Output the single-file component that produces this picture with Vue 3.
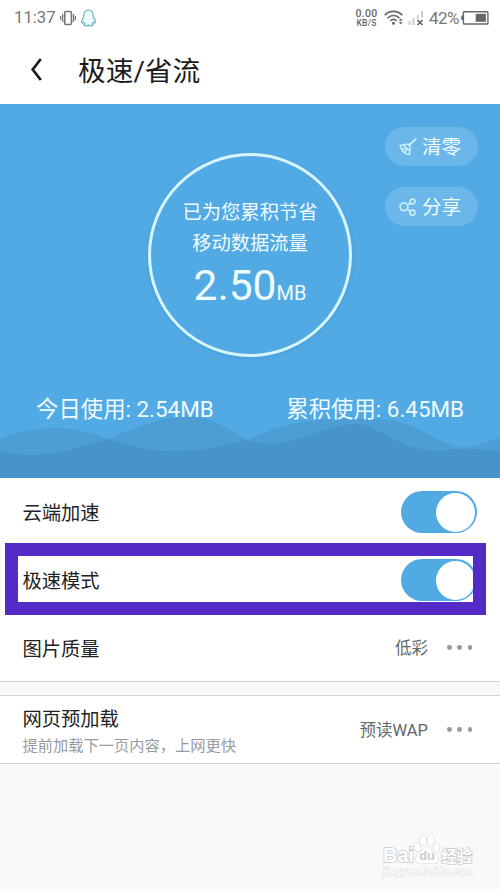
<script setup>
import { reactive } from 'vue'

const toggles = reactive([
  { label: '云端加速', on: true, marked: false },
  { label: '极速模式', on: true, marked: true },
])
</script>

<template>
  <div class="screen">
    <header class="status">
      <span class="time">11:37</span>
      <svg class="vibrate" width="16" height="16" viewBox="0 0 16 16" fill="none" stroke="#777">
        <rect x="4.8" y="1.5" width="6.6" height="13" rx="1" stroke-width="1.6" />
        <path d="M2.7 4v8M13.5 4v8M.7 6v4M15.4 6v4" stroke-width="1.3" />
      </svg>
      <svg class="penguin" width="15" height="18" viewBox="0 0 15 18" fill="#f2fcff" stroke="#59a9c4" stroke-width="1.1" stroke-linejoin="round">
        <path d="M7.5 1C4.700 1 3 3 3 5.800c0 1.600-.4 2.400-1.200 3.700C.8 11.200.6 13.500 1.200 14c.5.4 1.200-.4 1.600-1 .2.900.600 1.500 1.200 2-1 .5-1.400 1.500-.4 1.800 1.500.5 3-.1 3.900-.8.9.7 2.400 1.300 3.900.8 1-.3.6-1.300-.4-1.800.6-.5 1-1.100 1.200-2 .4.6 1.100 1.400 1.600 1 .6-.5.4-2.800-.6-4.500C12.400 8.200 12 7.400 12 5.800 12 3 10.300 1 7.500 1z" />
      </svg>
      <span class="spacer"></span>
      <span class="speed"><b>0.00</b><small>KB/S</small></span>
      <svg class="wifi" width="20" height="16" viewBox="0 0 20 16" fill="none" stroke="#666" stroke-width="1.7">
        <path d="M.8 5.200C5.500.2 13.500.2 18.200 5.200M3.500 8.200c3.300-3.600 8.700-3.600 12 0M6.300 11c1.900-1.900 4.500-1.900 6.400 0" />
        <circle cx="9.500" cy="13.200" r="1.500" fill="#666" stroke="none" />
        <path d="M14.900 10.700 16.700 8.300l1.800 2.400zM14.900 12l1.800 2.400 1.800-2.400z" fill="#666" stroke="none" />
      </svg>
      <svg class="signal" width="16" height="16" viewBox="0 0 16 16">
        <path d="M.5 11h2v4h-2zM4.500 8h2v7h-2zM8.800 5h2v4h-2zM13 1h2v6.500h-2z" fill="#ccc" />
        <path d="m9.500 10 5 5m0-5-5 5" stroke="#666" stroke-width="1.700" />
      </svg>
      <span class="percent">42%</span>
      <svg class="battery" width="28" height="16" viewBox="0 0 28 16">
        <path d="M.3 5.500h1.700v4.500H.3z" fill="#666" />
        <rect x="2.400" y="1.700" width="24.500" height="12.300" rx=".8" fill="none" stroke="#666" stroke-width="1.400" />
        <path d="M14.700 3.800h10.200v8H14.700z" fill="#666" />
      </svg>
    </header>

    <nav class="titlebar">
      <svg width="12" height="24" viewBox="0 0 12 24" fill="none" stroke="#1c1c1c" stroke-width="2.700">
        <path d="M10.800 1 2.700 11.500l8.100 10.500" />
      </svg>
      <h1>极速/省流</h1>
    </nav>

    <section class="hero">
      <svg class="waves" width="500" height="66" viewBox="0 0 500 66">
        <path d="M0 27C18 20 35 16 55 16c20 0 38 5 52 11 22 8 45 12 68 12 28 0 50-5 75-12C293 4 348 6 380 7c33 1 50 20 75 27 8 2 12 2 18 0 10-3 18-5 27-9v41H0z" />
        <path d="M0 40c35 6 60 3 107-13 34-13 50-22 83-22 25 0 40 15 60 24 40 11 72-17 107-17 22 0 40 27 83 27 22-4 40-1 60 0v27H0z" />
      </svg>
      <div class="actions">
        <button>
          <svg width="20" height="20" viewBox="0 0 20 20" fill="none" stroke="currentColor" stroke-width="1.500" stroke-linejoin="round" stroke-linecap="round">
            <path d="m17.500 2.200-6.400 6" stroke-width="2" />
            <path d="M2 8.500l8.300-1.400 2 2.200-.8 8.200C6.500 17 3.500 14 2 8.500zM6 8.700l5.500 5M4 12l4.500-.6M7 15l2-2.500" />
          </svg>
          <span>清零</span>
        </button>
        <button>
          <svg width="20" height="20" viewBox="0 0 20 20" fill="none" stroke="currentColor" stroke-width="1.700">
            <circle cx="6" cy="9.800" r="3.900" /><circle cx="14.500" cy="4.500" r="2.500" /><circle cx="14.500" cy="15.700" r="2.500" />
            <path d="m9.500 7.800 2.800-1.600M9.300 12l3.200 2.400" />
          </svg>
          <span>分享</span>
        </button>
      </div>
      <div class="ring">
        <p>已为您累积节省</p>
        <p>移动数据流量</p>
        <div class="saved"><strong>2.50</strong><span>MB</span></div>
      </div>
      <div class="stats">
        <span>今日使用: 2.54MB</span>
        <span>累积使用: 6.45MB</span>
      </div>
    </section>

    <section class="group">
      <div v-for="t in toggles" :key="t.label" class="row" :class="{ marked: t.marked }">
        <span class="label">{{ t.label }}</span>
        <button class="switch" :class="{ on: t.on }" @click="t.on = !t.on"><i></i></button>
      </div>
      <div class="row">
        <span class="label">图片质量</span>
        <span class="value">低彩</span>
        <span class="dots"><i></i><i></i><i></i></span>
      </div>
    </section>

    <section class="group second">
      <div class="row">
        <div class="label">
          <div class="name">网页预加载</div>
          <div class="hint">提前加载下一页内容，上网更快</div>
        </div>
        <span class="value">预读WAP</span>
        <span class="dots"><i></i><i></i><i></i></span>
      </div>
    </section>

    <footer class="watermark">
      <div class="brand">
        <span>Bai</span>
        <span class="paw">
          <svg width="28" height="31" viewBox="0 0 28 31" fill="#fff" stroke="#d0d0d0" stroke-width="1">
            <ellipse cx="4.500" cy="13" rx="3" ry="4.500" transform="rotate(-15 4.500 13)" />
            <ellipse cx="10" cy="6" rx="3.200" ry="4.800" />
            <ellipse cx="18" cy="6" rx="3.200" ry="4.800" transform="rotate(8 18 6)" />
            <ellipse cx="23.500" cy="13.500" rx="3" ry="4.500" transform="rotate(15 23.500 13.500)" />
            <path d="M14 13c-3 0-4 3-7 5.500-3.500 3-4.500 5-4 7.500.7 3.500 4 4 7 3.500h8c3 .5 6.500 0 7-3.500.4-2.500-.6-4.500-4-7.500-3-2.500-4-5.500-7-5.500z" />
          </svg>
          <em>du</em>
        </span>
        <span class="cn">经验</span>
      </div>
      <div class="site">jingyan.baidu.com</div>
    </footer>
  </div>
</template>

<style>
body {
  margin: 0;
  background: #fafafa;
}
</style>

<style scoped>
.screen {
  width: 500px;
  height: 889px;
  overflow: hidden;
  display: flex;
  flex-direction: column;
  background: #f9f9f9;
  font-family: Roboto, "Noto Sans CJK SC", sans-serif;
  color: #222;
}
button {
  border: 0;
  padding: 0;
  font: inherit;
  color: inherit;
}
.status {
  flex: none;
  display: flex;
  align-items: center;
  box-sizing: border-box;
  height: 36px;
  padding: 0 11px 0 14px;
  background: #fff;
  color: #777;
}
.time { font-size: 16.7px; line-height: 20px; width: 41px; }
.vibrate { margin-left: 5px; }
.penguin { margin-left: 5px; }
.spacer { flex: 1; }
.speed {
  display: flex;
  flex-direction: column;
  align-items: center;
  color: #666;
  width: 23px;
}
.speed b { font-size: 10.5px; line-height: 10px; font-weight: 500; letter-spacing: .3px; }
.speed small { font-size: 8.5px; line-height: 9px; font-weight: 500; letter-spacing: .2px; }
.wifi { margin-left: 6px; }
.signal { margin-left: 4px; }
.percent { font-size: 17px; line-height: 20px; width: 31px; margin-left: 5px; letter-spacing: -.5px; }
.battery { margin-left: 1px; }
.titlebar {
  flex: none;
  display: flex;
  align-items: center;
  height: 68px;
  padding-left: 30px;
  background: #fff;
}
h1 {
  margin: 0 0 0 36px;
  padding-top: 3px;
  font-size: 27.7px;
  line-height: 40px;
  font-weight: 400;
  color: #1c1c1c;
}
.hero {
  flex: none;
  position: relative;
  display: flex;
  flex-direction: column;
  align-items: center;
  box-sizing: border-box;
  height: 374px;
  padding-top: 49px;
  background: #52aae5;
  color: #effcff;
}
.waves {
  position: absolute;
  left: 0;
  bottom: 0;
  fill: #306c90;
  fill-opacity: .18;
}
.actions {
  position: absolute;
  top: 23px;
  right: 22px;
  display: flex;
  flex-direction: column;
  gap: 21px;
}
.actions button {
  display: flex;
  align-items: center;
  width: 93px;
  height: 39px;
  padding-left: 13px;
  gap: 4px;
  border-radius: 20px;
  background: #6bb7e9;
  font-size: 19.5px;
  line-height: 28px;
}
.actions span { padding-top: 3px; }
.actions svg { color: #c8eefa; }
.ring {
  box-sizing: border-box;
  width: 204px;
  height: 204px;
  padding-top: 41px;
  border: 3px solid #d7f6fd;
  border-radius: 50%;
  box-shadow: 0 1px 4px rgba(30, 100, 150, .18);
  text-align: center;
  position: relative;
}
.ring p {
  margin: 0;
  font-size: 19.3px;
  line-height: 31px;
}
.saved {
  display: flex;
  justify-content: center;
  align-items: baseline;
  padding-top: 1px;
  line-height: 52px;
}
.saved strong { font-size: 42.5px; font-weight: 400; }
.saved span { font-size: 20px; }
.stats {
  position: relative;
  align-self: stretch;
  display: flex;
  justify-content: space-between;
  margin-top: 36px;
  padding: 0 36px;
  font-size: 22.4px;
  line-height: 32px;
}
.group {
  flex: none;
  background: #fff;
  border-bottom: 1px solid #d4d6d6;
}
.row {
  display: flex;
  align-items: center;
  box-sizing: border-box;
  height: 68px;
  padding: 0 23px 0 22.5px;
  position: relative;
}
.group > .row:last-child { height: 67px; }
.row.marked::after {
  content: "";
  position: absolute;
  left: 5px;
  top: -3.500px;
  width: 455px;
  height: 46px;
  border: 13px solid #552bc7;
}
.label {
  flex: 1;
  padding-top: 4px;
  font-size: 19.3px;
  line-height: 28px;
}
.hint {
  font-size: 15.25px;
  line-height: 24px;
  color: #969c9f;
}
.switch {
  display: flex;
  align-items: center;
  box-sizing: border-box;
  width: 76px;
  height: 42px;
  padding: 0 2px;
  border-radius: 21px;
  background: #ccc;
}
.switch.on {
  justify-content: flex-end;
  background: #52aae3;
}
.switch i {
  width: 39px;
  height: 39px;
  border-radius: 50%;
  background: #fff;
}
.value {
  padding-top: 2px;
  font-size: 16.5px;
  line-height: 24px;
  color: #62676a;
}
.dots {
  display: flex;
  gap: 5.500px;
  width: 26px;
  margin: 0 4px 0 19px;
}
.dots i {
  flex: none;
  width: 4.800px;
  height: 4.800px;
  border-radius: 50%;
  background: #999;
}
.second {
  margin-top: 13px;
  border-top: 1px solid #d4d6d6;
}
.watermark {
  margin: 70px 22px 0 auto;
  width: 95px;
  color: #fff;
}
.brand {
  display: flex;
  align-items: flex-end;
  height: 31px;
  font: 700 20px/20px "Liberation Sans", sans-serif;
  -webkit-text-stroke: 1.5px #c8c8c8;
  paint-order: stroke fill;
}
.paw { position: relative; display: flex; margin-left: -1px; }
.paw em {
  position: absolute;
  left: 6px;
  bottom: 1px;
  font: 700 13px/16px "Liberation Sans", sans-serif;
  color: #ccc;
  -webkit-text-stroke: 0;
}
.cn { font: 700 15.500px/20px "Noto Sans CJK SC", sans-serif; }
.site {
  font: 700 10.300px/14px "Liberation Sans", sans-serif;
  -webkit-text-stroke: 1.2px #ddd;
  paint-order: stroke fill;
}
</style>
